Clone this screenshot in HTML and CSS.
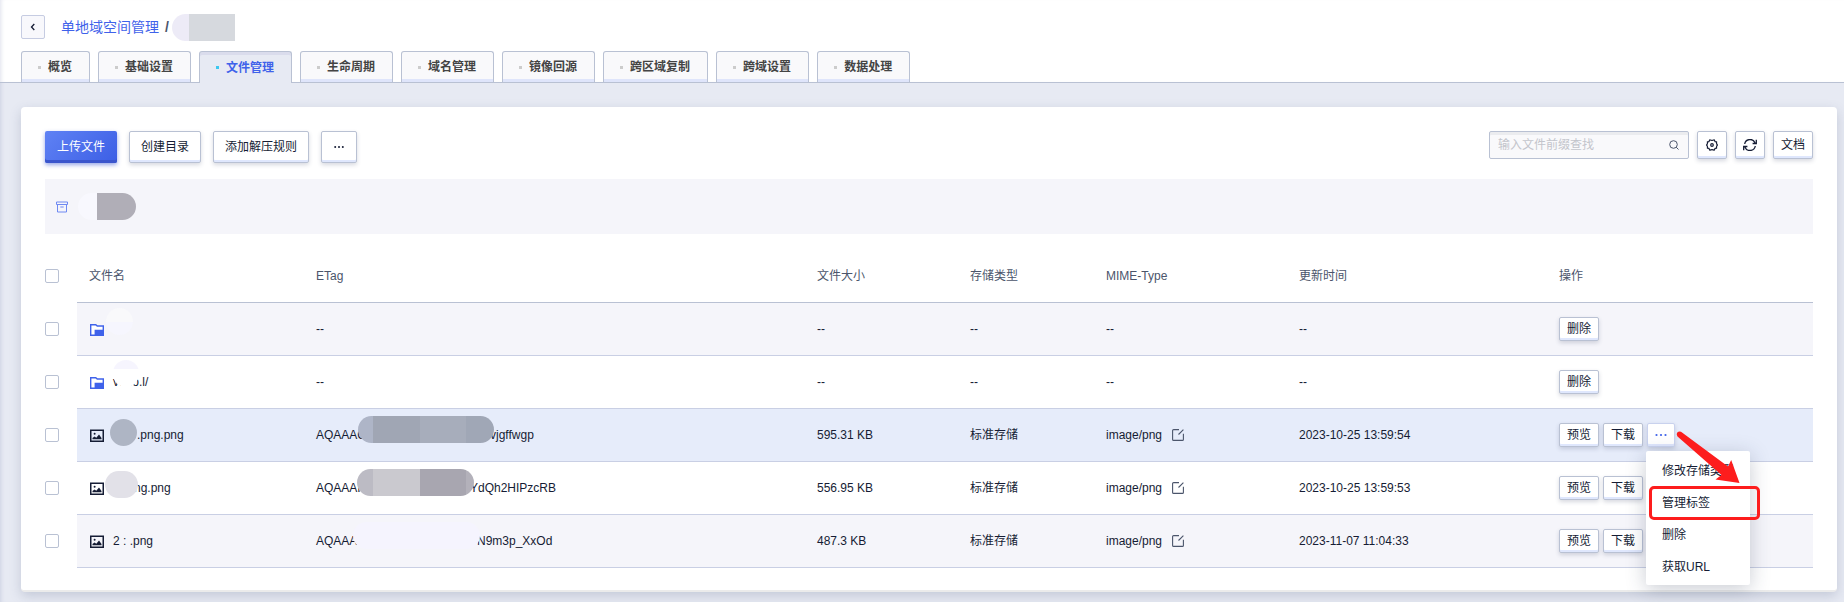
FILE: index.html
```html
<!DOCTYPE html>
<html lang="zh-CN">
<head>
<meta charset="utf-8">
<title>文件管理</title>
<link rel="stylesheet" href="styles.css">
</head>
<body>
<svg class="sprite" aria-hidden="true">
  <symbol id="i-folder" viewBox="-1 -2 16 16"><path fill="#fff" d="M1 2h12v5H5v5H1z"/><path fill="#3f62ea" fill-rule="evenodd" d="M0 1h6l1.500 1.300H14V13H0zM1.400 2.400v9.200H4.600V6.800H12.600V3.800H7L5.500 2.400z"/></symbol>
  <symbol id="i-image" viewBox="-1 -2 16 16"><path fill="#151c34" fill-rule="evenodd" d="M0 .5h14v12.500H0zM1.500 2v9.500h11V2z"/><path fill="#151c34" d="M2.500 10.300V9L4.500 7.500l1.800 1.200L9 5.500l2.500 3.500v1.300z"/><circle cx="4.600" cy="4.800" r="1" fill="#151c34"/></symbol>
  <symbol id="i-edit" viewBox="0 0 12 12"><path fill="none" stroke="#4b556b" stroke-width="1.100" d="M7 .6H1.600q-1 0-1 1v8.800q0 1 1 1h8.800q1 0 1-1V4.800M6.500 5.500 11.400.6"/></symbol>
</svg>
<header class="top">
  <div class="crumb">
    <button class="back" aria-label="返回"><svg width="8" height="8" viewBox="0 0 8 8"><path d="M5.300 1 2.500 4l2.800 3" fill="none" stroke="#151c34" stroke-width="1.300"/></svg></button>
    <h1 class="title"><a href="#">单地域空间管理</a><span class="slash">/</span></h1>
    <span class="blob blob-title"></span>
  </div>
  <nav class="tabs">
    <a class="tab" href="#">概览</a>
    <a class="tab" href="#">基础设置</a>
    <a class="tab active" href="#" aria-current="page">文件管理</a>
    <a class="tab" href="#">生命周期</a>
    <a class="tab" href="#">域名管理</a>
    <a class="tab" href="#">镜像回源</a>
    <a class="tab" href="#">跨区域复制</a>
    <a class="tab" href="#">跨域设置</a>
    <a class="tab" href="#">数据处理</a>
  </nav>
</header>
<main class="card">
  <div class="toolbar">
    <div class="group">
      <button class="btn primary">上传文件</button>
      <button class="btn">创建目录</button>
      <button class="btn">添加解压规则</button>
      <button class="btn" aria-label="更多"><svg width="10" height="4" viewBox="0 0 10 4" fill="#151c34"><circle cx="1.200" cy="2" r="1"/><circle cx="5" cy="2" r="1"/><circle cx="8.800" cy="2" r="1"/></svg></button>
    </div>
    <div class="tools">
      <label class="search">
        <input type="text" placeholder="输入文件前缀查找" aria-label="输入文件前缀查找">
        <svg width="10" height="10" viewBox="0 0 10 10" fill="none" stroke="#4b556b"><circle cx="4.500" cy="4.500" r="3.800"/><path d="M7.200 7.200 9.500 9.500"/></svg>
      </label>
      <button class="btn tool" aria-label="设置"><svg width="12" height="12" viewBox="0 0 12 12" fill="none" stroke="#151c34" stroke-width="1.200"><path stroke-linejoin="round" d="M3.800.8Q6 2 8.200.8L9 2.600l1.600.3Q10.200 4.800 11.400 6q-1.200 1.200-.8 3.100L9 9.400l-.8 1.800Q6 10 3.800 11.200L3 9.400l-1.600-.3Q1.800 7.200.6 6q1.200-1.200.8-3.100L3 2.600z"/><circle cx="6" cy="6" r="1.300"/></svg></button>
      <button class="btn tool" aria-label="刷新"><svg width="14" height="12" viewBox="0 0 14 12" fill="none" stroke="#151c34" stroke-width="1.300"><path d="M1.700 5A5.400 5.400 0 0 1 12 3.800M13.300.8v3.700H9.600M12.300 7A5.400 5.400 0 0 1 2 8.200M.7 11.200V7.500h3.700"/></svg></button>
      <button class="btn tool">文档</button>
    </div>
  </div>
  <div class="path">
    <svg width="12" height="12" viewBox="0 0 12 12" fill="none" stroke="#6f89f2"><path d="M.5 1h11v2.500H.5zM1.500 3.500v7.500h9V3.500M4.300 6h3.400"/></svg>
    <span class="blob blob-path"></span>
  </div>
  <table class="files">
    <colgroup><col class="c-check"><col class="c-name"><col><col class="c-size"><col class="c-type"><col class="c-mime"><col class="c-time"><col class="c-ops"></colgroup>
    <thead>
      <tr><th><input type="checkbox" aria-label="全选"></th><th>文件名</th><th>ETag</th><th>文件大小</th><th>存储类型</th><th>MIME-Type</th><th>更新时间</th><th>操作</th></tr>
    </thead>
    <tbody>
      <tr class="shade">
        <td><input type="checkbox" aria-label="选择目录"></td>
        <td><span class="cell"><svg class="ico"><use href="#i-folder"/></svg><i class="blob n1"></i></span></td>
        <td>--</td><td>--</td><td>--</td><td>--</td><td>--</td>
        <td><span class="ops"><button class="btn small">删除</button></span></td>
      </tr>
      <tr>
        <td><input type="checkbox" aria-label="选择目录"></td>
        <td><span class="cell"><svg class="ico"><use href="#i-folder"/></svg><span>vooo.l/</span><i class="blob n2"></i></span></td>
        <td>--</td><td>--</td><td>--</td><td>--</td><td>--</td>
        <td><span class="ops"><button class="btn small">删除</button></span></td>
      </tr>
      <tr class="hover">
        <td><input type="checkbox" aria-label="选择文件"></td>
        <td><span class="cell"><svg class="ico"><use href="#i-image"/></svg><span class="after3">.png.png</span><i class="blob n3"></i></span></td>
        <td><span class="cell etag"><span class="head">AQAAAC</span><span>vjgffwgp</span><i class="blob e3"></i></span></td>
        <td>595.31 KB</td><td>标准存储</td>
        <td><span class="mime">image/png<svg><use href="#i-edit"/></svg></span></td>
        <td>2023-10-25 13:59:54</td>
        <td><span class="ops"><button class="btn small">预览</button><button class="btn small">下载</button>
          <span class="more"><button class="btn small dots" aria-label="更多" aria-expanded="true"><svg width="12" height="4" viewBox="0 0 12 4" fill="#3f62ea"><circle cx="1.500" cy="2" r="1.100"/><circle cx="6" cy="2" r="1.100"/><circle cx="10.500" cy="2" r="1.100"/></svg></button>
            <span class="menu">
              <button>修改存储类型</button><button>管理标签</button><button>删除</button><button>获取URL</button>
              <i class="mark"></i>
              <svg class="arrow" width="66" height="54" viewBox="0 0 66 54"><path fill="#fd1d1d" d="M5 .8 52 35.500 55.200 29 63.500 52 39.500 48.500 45.500 44 1.500 5.500Q0 3 1.500 1.300 3-.2 5 .8z"/></svg>
            </span>
          </span></span></td>
      </tr>
      <tr>
        <td><input type="checkbox" aria-label="选择文件"></td>
        <td><span class="cell"><svg class="ico"><use href="#i-image"/></svg><span class="after4">ng.png</span><i class="blob n4"></i></span></td>
        <td><span class="cell etag"><span class="head">AQAAAI</span><span class="tail4">YdQh2HIPzcRB</span><i class="blob e4"></i></span></td>
        <td>556.95 KB</td><td>标准存储</td>
        <td><span class="mime">image/png<svg><use href="#i-edit"/></svg></span></td>
        <td>2023-10-25 13:59:53</td>
        <td><span class="ops"><button class="btn small">预览</button><button class="btn small">下载</button></span></td>
      </tr>
      <tr class="shade">
        <td><input type="checkbox" aria-label="选择文件"></td>
        <td><span class="cell"><svg class="ico"><use href="#i-image"/></svg><span>2 : .png</span></span></td>
        <td><span class="cell etag"><span class="head">AQAAA</span><span class="tail5">N9m3p_XxOd</span><i class="blob e5"></i></span></td>
        <td>487.3 KB</td><td>标准存储</td>
        <td><span class="mime">image/png<svg><use href="#i-edit"/></svg></span></td>
        <td>2023-11-07 11:04:33</td>
        <td><span class="ops"><button class="btn small">预览</button><button class="btn small">下载</button></span></td>
      </tr>
    </tbody>
  </table>
</main>
</body>
</html>
```
FILE: styles.css
```css
* { box-sizing: border-box; }
body {
  margin: 0;
  min-height: 100vh;
  background: #e7eaf3;
  box-shadow: inset 4px 0 4px -3px #cdd1e2;
  color: #151c34;
  font: 12px/18px "Liberation Sans", "Noto Sans CJK SC", sans-serif;
}
button, input { font: inherit; color: inherit; }
button { cursor: pointer; }
a { text-decoration: none; }
.sprite { display: none; }

.top {
  padding: 13px 21px 0;
  background: #fff;
  border-bottom: 1px solid #b9c1d3;
  box-shadow: inset 4px 0 4px -3px #dfe1ec;
}
.crumb { display: flex; align-items: center; height: 28px; }
.back {
  display: flex; align-items: center; justify-content: center;
  width: 24px; height: 24px; padding: 0;
  border: 1px solid #c6cce2; border-radius: 2px; background: #f8f8fc;
}
.title { margin: 0 0 0 16px; font-size: 14px; line-height: 20px; font-weight: 400; }
.title a { color: #3f62ea; }
.slash { margin: 0 3px 0 6px; font-weight: 700; color: #4b556b; }
.blob { display: block; }
.blob-title {
  width: 63px; height: 27px; border-radius: 14px 0 0 14px;
  background: linear-gradient(90deg, #edebf7 17px, #d6d9de 17px);
}

.tabs { display: flex; gap: 8px; margin-top: 10px; }
.tab {
  display: flex; align-items: center; gap: 7px;
  height: 31px; padding: 0 17px 0 16px;
  border: 1px solid #b9c1d3; border-bottom: 0; border-radius: 3px 3px 0 0;
  background: #f9f9fb; box-shadow: inset 0 -3px #dfe5fb;
  color: #444; font-weight: 600;
}
.tab::before { content: ""; width: 3px; height: 3px; background: #ccc; }
.tab.active {
  margin-bottom: -1px; height: 32px;
  background: #e7eaf3; box-shadow: inset 0 3px #dadcec; color: #3f62ea;
}
.tab.active::before { background: #3cc8f0; }

.card {
  margin: 24px 7px 10px 21px; padding: 24px 24px 22px;
  border-radius: 4px; border-bottom: 2px solid #ebebeb; background: #fff;
  box-shadow: 0 4px 12px rgba(70, 80, 120, .22);
}
.toolbar { display: flex; justify-content: space-between; align-items: flex-start; }
.group { display: flex; gap: 12px; }
.tools { display: flex; gap: 8px; }
.btn {
  display: flex; align-items: center; justify-content: center;
  height: 32px; padding: 0 11px;
  border: 1px solid #b9c1d3; border-radius: 2px; background: #fff;
  box-shadow: inset 0 -2px #dfe7fd, 0 2px 4px rgba(55, 65, 100, .2);
  white-space: nowrap;
}
.btn.primary {
  padding: 0 12px; border: 0; color: #fff;
  background: linear-gradient(135deg, #5f82f4, #3c5ee5);
  box-shadow: inset 0 -3px #3a55cc, 0 2px 4px rgba(50, 80, 210, .5);
}
.group .btn[aria-label] { padding: 0 12px; }
.btn.tool { height: 28px; min-width: 30px; padding: 0 7px; }
.search {
  display: flex; align-items: center;
  width: 200px; height: 28px; padding: 0 9px 0 8px;
  border: 1px solid #b9c1d3; border-radius: 2px;
  background: #f9f9fb; box-shadow: inset 0 3px #ebecef;
}
.search input { flex: 1; min-width: 0; padding: 0; border: 0; outline: 0; background: none; }
.search input::placeholder { color: #c3c5cc; }

.path {
  display: flex; align-items: center; gap: 10px;
  height: 55px; margin-top: 16px; padding: 0 11px; background: #f5f5fa;
}
.blob-path {
  width: 58px; height: 27px; border-radius: 14px;
  background: linear-gradient(90deg, #f8f8fe 19px, #b0aeb7 19px);
}

.files { width: 100%; margin-top: 15px; border-collapse: separate; border-spacing: 0; table-layout: fixed; }
.c-check { width: 32px; }
.c-name { width: 227px; }
.c-size { width: 153px; }
.c-type { width: 136px; }
.c-mime { width: 193px; }
.c-time { width: 260px; }
.c-ops { width: 266px; }
.files th, .files td {
  height: 53px; padding: 0 12px; text-align: left; vertical-align: middle;
  border-bottom: 1px solid #c9cfe4; font-weight: 400;
}
.files th { height: 54px; color: #4b556b; border-bottom-color: #b9c1d3; }
.files th:first-child, .files td:first-child { padding: 0; border-bottom-color: #fff; background: #fff; }
.files input {
  display: block; appearance: none; width: 14px; height: 14px; margin: 0;
  border: 1px solid #b9c1d3; border-radius: 2px; background: #fff;
}
.shade td { background: #f5f5fa; }
.hover td { background: #e6ecfa; }
.cell { position: relative; display: flex; align-items: center; gap: 8px; height: 18px; }
.ico { width: 16px; height: 16px; }
.cell .blob { position: absolute; height: 27px; border-radius: 14px; }
.after3 { margin-left: 24px; }
.after4 { margin-left: 21px; }
.n1 { left: 17px; top: -12px; width: 27px; background: linear-gradient(#f9f9fb 14px, #f6f6fe 14px); }
.n2 { left: 24px; top: -13px; width: 26px; background: linear-gradient(#f6f5fe 9px, #fff 9px); }
.n3 { left: 21px; top: -7px; width: 27px; background: #aeb5c4; }
.n4 { left: 16px; top: -8px; width: 33px; background: #e2e1e8; }
.etag { gap: 0; }
.etag .head { width: 174px; }
.etag .tail4 { margin-left: -20px; }
.etag .tail5 { margin-left: -13px; }
.e3 { left: 42px; top: -10px; width: 136px; background: linear-gradient(90deg, #aeb5c7 15px, #a0a6b4 15px 62px, #a7adbb 62px 108px, #a0a7b6 108px); }
.e4 { left: 41px; top: -10px; width: 117px; background: linear-gradient(90deg, #bcbbc4 16px, #cac9cf 16px 63px, #a8a6b0 63px 109px, #b3b1ba 109px); }
.e5 { left: 37px; top: -10px; width: 127px; background: #f5f4fe; }
.mime { display: flex; align-items: center; gap: 10px; }
.mime svg { width: 12px; height: 12px; }
.ops { display: flex; gap: 4px; }
.btn.small { height: 24px; padding: 0 7px; }
.more { position: relative; }
.btn.dots { width: 28px; border-color: #c9d2ee; }
.menu {
  position: absolute; z-index: 2; left: -1px; top: 28px;
  display: flex; flex-direction: column; width: 104px; padding: 4px 0 2px;
  border-radius: 2px; background: #fff; box-shadow: 0 4px 20px rgba(40, 50, 80, .25);
}
.menu button { height: 32px; padding: 0 16px; border: 0; background: none; text-align: left; white-space: nowrap; }
.mark { position: absolute; left: 3px; top: 35px; width: 111px; height: 34px; border: 3px solid #fd1d1d; border-radius: 5px; }
.arrow { position: absolute; left: 30px; top: -20px; }
```
